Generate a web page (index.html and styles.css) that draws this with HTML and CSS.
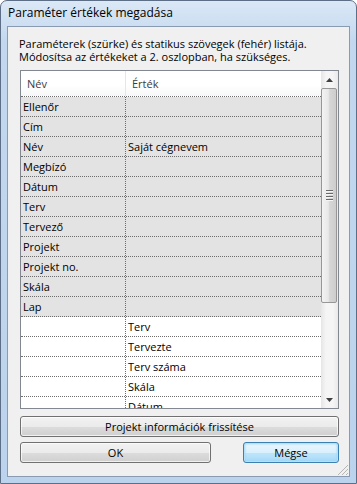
FILE: index.html
```html
<!DOCTYPE html>
<html lang="hu">
<head>
<meta charset="UTF-8">
<meta name="viewport" content="width=device-width, initial-scale=1.0">
<title>Paraméter értékek megadása</title>
<link rel="stylesheet" href="styles.css">
</head>
<body>
<div class="window">
  <div class="titlebar">Paraméter értékek megadása</div>
  <div class="client">
    <p class="intro">Paraméterek (szürke) és statikus szövegek (fehér) listája.<br>Módosítsa az értékeket a 2. oszlopban, ha szükséges.</p>
    <div class="listbox">
      <div class="list">
        <div class="row header"><div class="cell">Név</div><div class="cell">Érték</div></div>
        <div class="row param"><div class="cell">Ellenőr</div><div class="cell"></div></div>
        <div class="row param"><div class="cell">Cím</div><div class="cell"></div></div>
        <div class="row param"><div class="cell">Név</div><div class="cell">Saját cégnevem</div></div>
        <div class="row param"><div class="cell">Megbízó</div><div class="cell"></div></div>
        <div class="row param"><div class="cell">Dátum</div><div class="cell"></div></div>
        <div class="row param"><div class="cell">Terv</div><div class="cell"></div></div>
        <div class="row param"><div class="cell">Tervező</div><div class="cell"></div></div>
        <div class="row param"><div class="cell">Projekt</div><div class="cell"></div></div>
        <div class="row param"><div class="cell">Projekt no.</div><div class="cell"></div></div>
        <div class="row param"><div class="cell">Skála</div><div class="cell"></div></div>
        <div class="row param"><div class="cell">Lap</div><div class="cell"></div></div>
        <div class="row"><div class="cell"></div><div class="cell">Terv</div></div>
        <div class="row"><div class="cell"></div><div class="cell">Tervezte</div></div>
        <div class="row"><div class="cell"></div><div class="cell">Terv száma</div></div>
        <div class="row"><div class="cell"></div><div class="cell">Skála</div></div>
        <div class="row"><div class="cell"></div><div class="cell">Dátum</div></div>
      </div>
      <div class="scrollbar">
        <div class="arrow up"><svg width="7" height="4" viewBox="0 0 7 4"><path d="M0 4 L3.5 0 L7 4 Z" fill="#404040"/></svg></div>
        <div class="track">
          <div class="thumb">
            <span class="grip"></span><span class="grip"></span><span class="grip"></span><span class="grip"></span>
          </div>
        </div>
        <div class="arrow down"><svg width="7" height="4" viewBox="0 0 7 4"><path d="M0 0 L3.5 4 L7 0 Z" fill="#404040"/></svg></div>
      </div>
    </div>
    <button class="btn wide">Projekt információk frissítése</button>
    <div class="btn-row">
      <button class="btn ok">OK</button>
      <button class="btn default">Mégse</button>
    </div>
    <div class="sizegrip"></div>
  </div>
</div>
</body>
</html>
```

FILE: styles.css
```css
body {
  margin: 0;
  background: #ffffff;
  font-family: 'Open Sans', 'Liberation Sans', sans-serif;
  font-size: 11px;
  color: #000;
}
.window {
  width: 357px;
  height: 484px;
  box-sizing: border-box;
  border: 1px solid #5d6f86;
  border-radius: 7px 7px 0 0;
  background: linear-gradient(to bottom, #dbe8f6 0, #c3d8ef 40px, #bcd3ed 100%);
  padding: 0 6px 0 6px;
  display: flex;
  flex-direction: column;
}
.titlebar {
  height: 25px;
  line-height: 24px;
  padding-left: 1px;
  font-size: 12px;
  color: #000;
}
.client {
  position: relative;
  height: 451px;
  box-sizing: border-box;
  border: 1px solid #8a9bb1;
  background: #f0f0f0;
  padding: 10px 10px 0 12px;
}
.intro {
  margin: 0 0 7px -1px;
  line-height: 13px;
  color: #000;
}
.listbox {
  display: flex;
  height: 339px;
  box-sizing: border-box;
  border: 1px solid #828790;
  background: #fff;
  overflow: hidden;
}
.list {
  flex: 1;
  overflow: hidden;
}
.row {
  display: grid;
  grid-template-columns: 105px 1fr;
  height: 20px;
  box-sizing: border-box;
  border-bottom: 1px dotted #6d6d6d;
  line-height: 19px;
  background: #fff;
}
.row .cell:first-child {
  border-right: 1px dotted #6d6d6d;
}
.row.param {
  background: #e3e3e3;
}
.cell {
  padding-left: 2px;
  white-space: nowrap;
  overflow: hidden;
}
.header {
  height: 26px;
  line-height: 25px;
  background: linear-gradient(to bottom, #ffffff 0, #ffffff 55%, #f6f7f8 100%);
  color: #3c3c3c;
}
.header .cell {
  padding-left: 6px;
}
.header .cell:first-child {
  border-right: 1px solid #e4e6e9;
}
.scrollbar {
  width: 17px;
  display: flex;
  flex-direction: column;
  background: linear-gradient(to right, #e6e6e6, #f5f5f5 30%, #f5f5f5 70%, #e9e9e9);
}
.arrow {
  height: 17px;
  display: flex;
  align-items: center;
  justify-content: center;
}
.track {
  flex: 1;
  display: flex;
  flex-direction: column;
}
.thumb {
  height: 215px;
  box-sizing: border-box;
  margin: 0 1px 0 0;
  border: 1px solid #979797;
  border-radius: 2px;
  background: linear-gradient(to right, #f3f3f3, #e8e8e8 45%, #d6d6d6 55%, #cdcdcd);
  display: flex;
  flex-direction: column;
  align-items: center;
  justify-content: center;
  gap: 1px;
}
.grip {
  width: 7px;
  height: 1px;
  background: #6a6a6a;
  border-bottom: 1px solid #f5f5f5;
}
.btn {
  display: block;
  box-sizing: border-box;
  height: 21px;
  padding: 0;
  border: 1px solid #707070;
  border-radius: 3px;
  background: linear-gradient(to bottom, #f2f2f2 0, #ebebeb 50%, #dddddd 50%, #cfcfcf 100%);
  box-shadow: inset 0 0 0 1px rgba(255, 255, 255, 0.7);
  font-family: 'Open Sans', 'Liberation Sans', sans-serif;
  font-size: 11px;
  color: #000;
}
.wide {
  width: 100%;
  margin-top: 7px;
}
.btn-row {
  display: flex;
  justify-content: space-between;
  margin-top: 5px;
}
.ok {
  width: 191px;
}
.default {
  width: 96px;
  border-color: #3c7fb1;
  background: linear-gradient(to bottom, #eaf6fd 0, #d9f0fc 50%, #bee6fd 50%, #a7d9f5 100%);
  box-shadow: inset 0 0 0 1px #b3e1fb, inset 0 0 2px 1px #8fd0f5;
}
.sizegrip {
  position: absolute;
  right: 1px;
  bottom: 1px;
  width: 10px;
  height: 10px;
  background: linear-gradient(135deg, transparent 0, transparent 45%, #b5b5b5 45%, #b5b5b5 52%, transparent 52%, transparent 65%, #b5b5b5 65%, #b5b5b5 72%, transparent 72%, transparent 85%, #b5b5b5 85%, #b5b5b5 92%, transparent 92%);
}
```
